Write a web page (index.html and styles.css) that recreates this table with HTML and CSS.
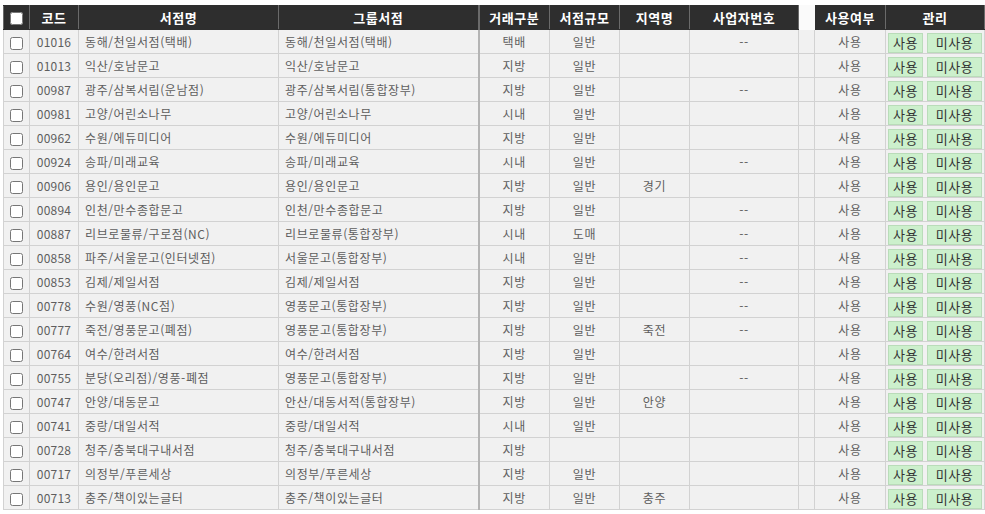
FILE: index.html
```html
<!DOCTYPE html>
<html lang="ko">
<head>
<meta charset="utf-8">
<title>서점 목록</title>
<link rel="stylesheet" href="styles.css">
</head>
<body>
<table class="list">
  <colgroup>
    <col class="c-chk"><col class="c-code"><col class="c-name"><col class="c-group"><col class="c-type"><col class="c-size"><col class="c-area"><col class="c-biz"><col class="c-gap"><col class="c-use"><col class="c-mng">
  </colgroup>
  <thead>
    <tr>
      <th><input type="checkbox" class="chk"></th>
      <th>코드</th>
      <th>서점명</th>
      <th>그룹서점</th>
      <th class="sep">거래구분</th>
      <th>서점규모</th>
      <th>지역명</th>
      <th>사업자번호</th>
      <th class="gap"></th>
      <th>사용여부</th>
      <th>관리</th>
    </tr>
  </thead>
  <tbody id="rows"></tbody>
</table>
<script src="app.js"></script>
</body>
</html>
```
FILE: app.js
```js
var data = [
  ["01016","동해/천일서점(택배)","동해/천일서점(택배)","택배","일반","","--"],
  ["01013","익산/호남문고","익산/호남문고","지방","일반","",""],
  ["00987","광주/삼복서림(운남점)","광주/삼복서림(통합장부)","지방","일반","","--"],
  ["00981","고양/어린소나무","고양/어린소나무","시내","일반","",""],
  ["00962","수원/에듀미디어","수원/에듀미디어","지방","일반","",""],
  ["00924","송파/미래교육","송파/미래교육","시내","일반","","--"],
  ["00906","용인/용인문고","용인/용인문고","지방","일반","경기",""],
  ["00894","인천/만수종합문고","인천/만수종합문고","지방","일반","","--"],
  ["00887","리브로물류/구로점(NC)","리브로물류(통합장부)","시내","도매","","--"],
  ["00858","파주/서울문고(인터넷점)","서울문고(통합장부)","시내","일반","","--"],
  ["00853","김제/제일서점","김제/제일서점","지방","일반","","--"],
  ["00778","수원/영풍(NC점)","영풍문고(통합장부)","지방","일반","","--"],
  ["00777","죽전/영풍문고(폐점)","영풍문고(통합장부)","지방","일반","죽전","--"],
  ["00764","여수/한려서점","여수/한려서점","지방","일반","",""],
  ["00755","분당(오리점)/영풍-폐점","영풍문고(통합장부)","지방","일반","","--"],
  ["00747","안양/대동문고","안산/대동서적(통합장부)","지방","일반","안양",""],
  ["00741","중랑/대일서적","중랑/대일서적","시내","일반","",""],
  ["00728","청주/충북대구내서점","청주/충북대구내서점","지방","","",""],
  ["00717","의정부/푸른세상","의정부/푸른세상","지방","일반","",""],
  ["00713","충주/책이있는글터","충주/책이있는글터","지방","일반","충주",""]
];
var tb = document.getElementById("rows");
var html = "";
data.forEach(function (r) {
  html += '<tr>' +
    '<td class="ct"><input type="checkbox" class="chk"></td>' +
    '<td class="ct num">' + r[0] + '</td>' +
    '<td class="lt">' + r[1] + '</td>' +
    '<td class="lt">' + r[2] + '</td>' +
    '<td class="ct sep">' + r[3] + '</td>' +
    '<td class="ct">' + r[4] + '</td>' +
    '<td class="ct">' + r[5] + '</td>' +
    '<td class="ct">' + r[6] + '</td>' +
    '<td></td>' +
    '<td class="ct">사용</td>' +
    '<td class="mng"><button class="btn b-use">사용</button><button class="btn b-off">미사용</button></td>' +
    '</tr>';
});
tb.innerHTML = html;
```
FILE: styles.css
```css
html, body {
  margin: 0;
  padding: 0;
  background: #fff;
}
body {
  padding: 5px 0 0 3px;
  font-family: "Noto Sans CJK KR", "Noto Sans", sans-serif;
  font-size: 12px;
  color: #5e5e5e;
}
.list {
  border-collapse: collapse;
  table-layout: fixed;
  width: 981px;
}
.c-chk { width: 26px; }
.c-code { width: 49px; }
.c-name { width: 200px; }
.c-group { width: 200px; }
.c-type { width: 71px; }
.c-size { width: 70px; }
.c-area { width: 70px; }
.c-biz { width: 109px; }
.c-gap { width: 16px; }
.c-use { width: 71px; }
.c-mng { width: 99px; }

.list th {
  height: 23px;
  padding: 0;
  background: #2e2e2e;
  color: #fff;
  font-size: 13px;
  font-weight: bold;
  letter-spacing: 0.5px;
  text-align: center;
  border: 1px solid #6a6a6a;
  border-top-color: #2e2e2e;
  border-bottom-color: #2e2e2e;
  line-height: 22px;
}
.list th.gap {
  background: #fafafa;
  border-color: #fafafa;
}
.list td {
  height: 23px;
  padding: 0;
  background: #f1f1f1;
  border: 1px solid #d2d2d2;
  line-height: 22px;
  letter-spacing: 0.6px;
  white-space: nowrap;
  overflow: hidden;
}
.list td.num { letter-spacing: 0.2px; }
.list td.ct { text-align: center; }
.list td.lt { text-align: left; padding-left: 6px; }
.list td.sep { border-left: 2px solid #b4b4b4; }
.list th.sep { border-left: 2px solid #6a6a6a; }

.chk {
  width: 13px;
  height: 13px;
  margin: 0;
  vertical-align: middle;
}

.list td.mng {
  padding: 0 0 0 1px;
  text-align: left;
  letter-spacing: 0;
}
.btn {
  height: 20px;
  margin: 0 0 0 1px;
  padding: 0;
  border: 1px solid #b9dcb9;
  background: #ccf0cc;
  color: #333;
  font-family: "Noto Sans CJK KR", "Noto Sans", sans-serif;
  font-size: 13px;
  letter-spacing: 0.5px;
  line-height: 18px;
  vertical-align: middle;
  cursor: pointer;
}
.b-use { width: 35px; }
.b-off { width: 55px; margin-left: 4px; }
```
